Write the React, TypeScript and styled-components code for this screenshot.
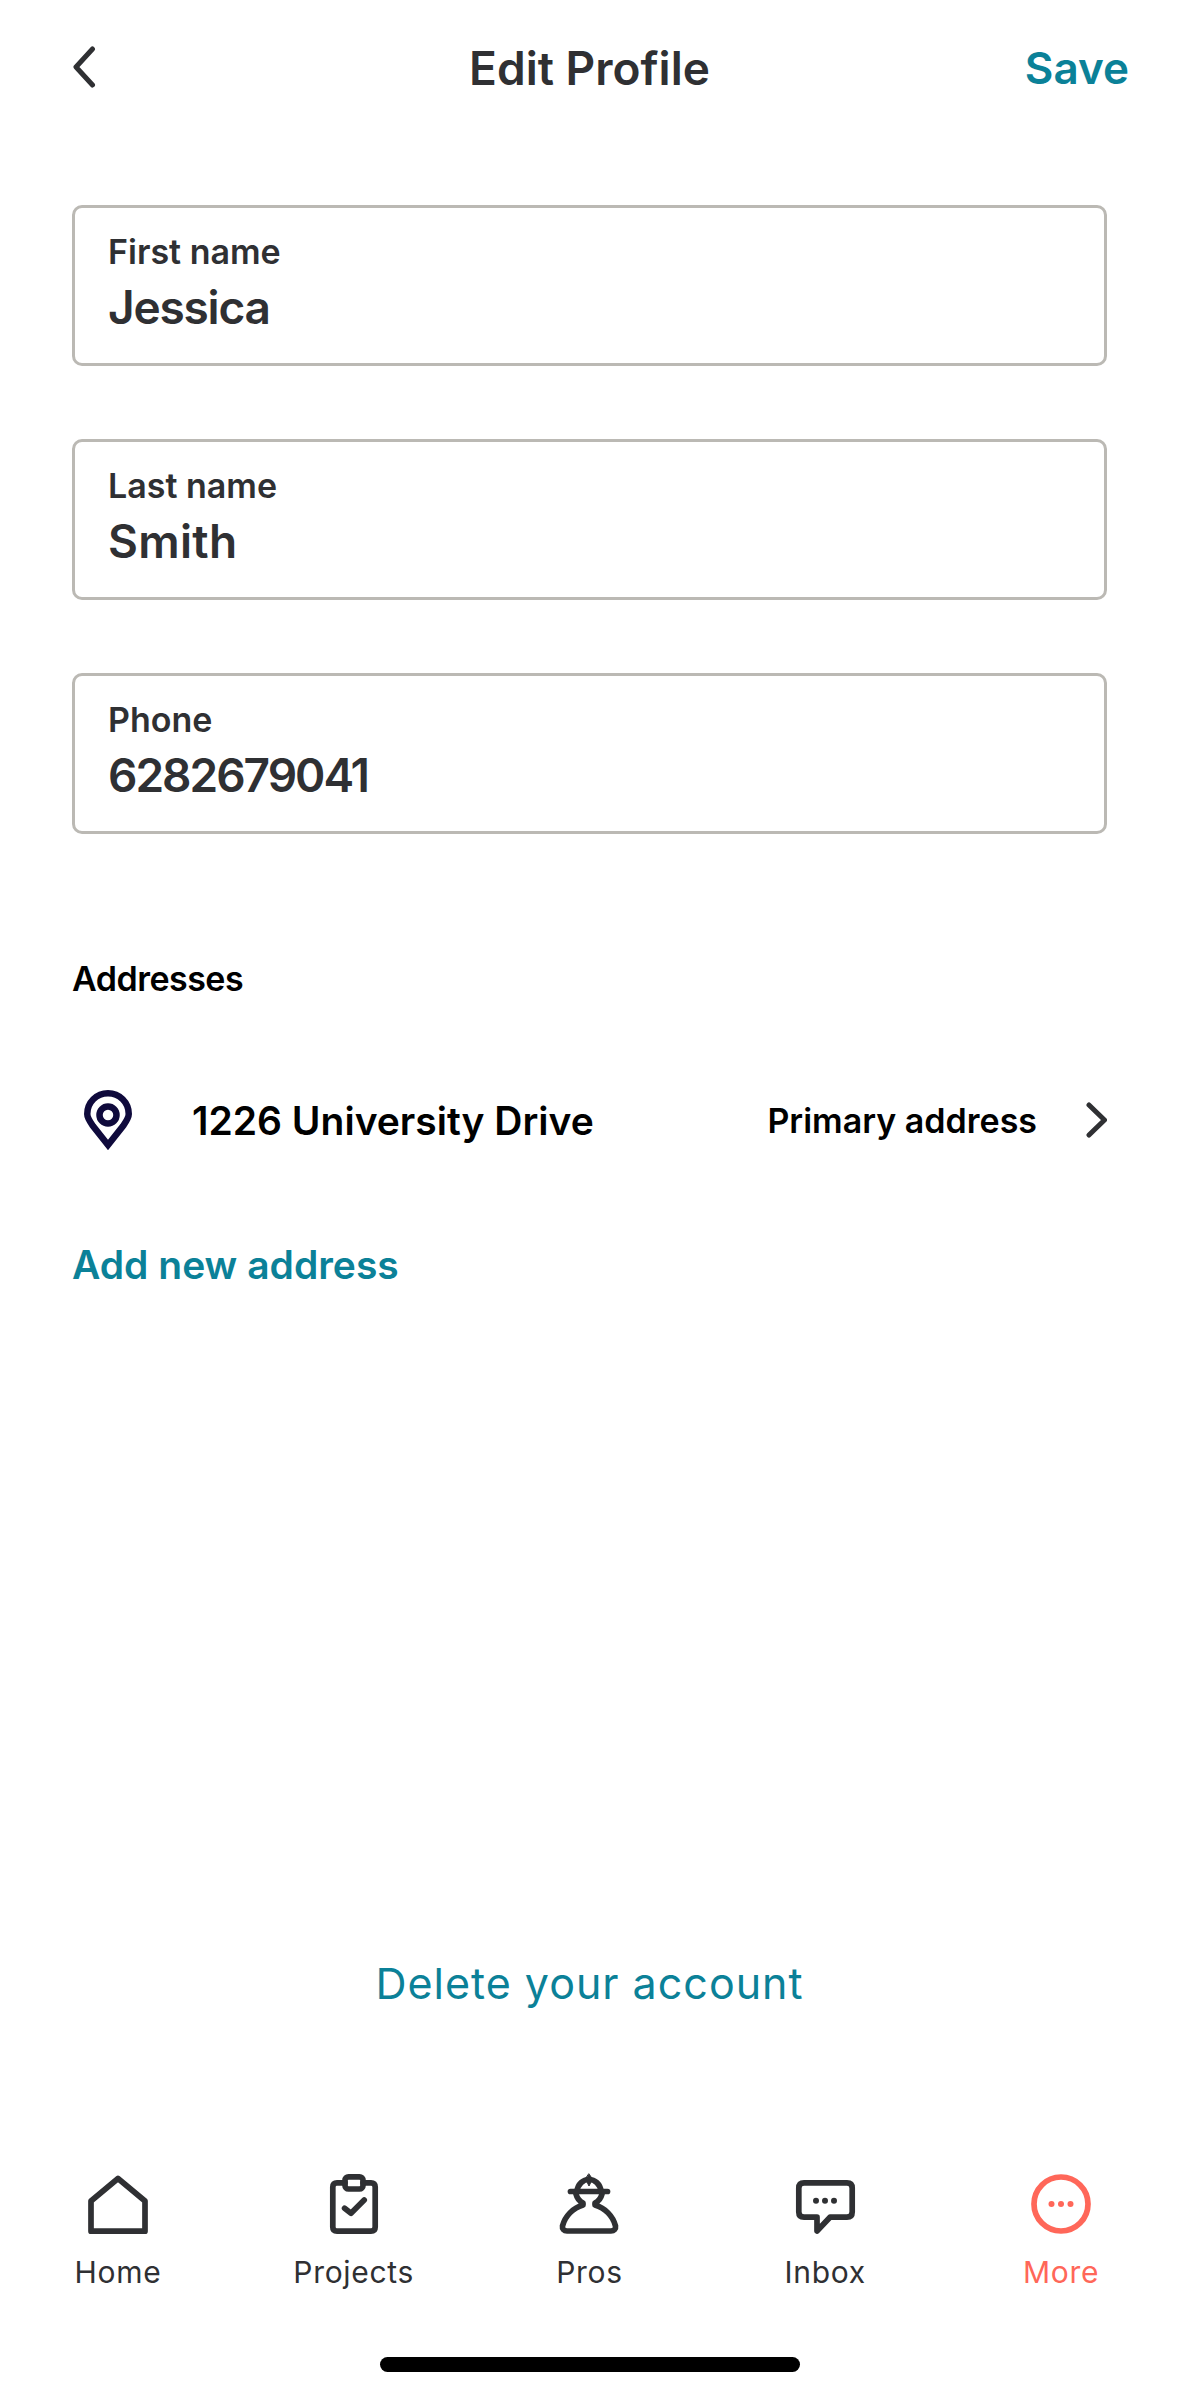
import React from 'react';
import styled, { createGlobalStyle } from 'styled-components';

const GlobalStyle = createGlobalStyle`
  html, body {
    margin: 0;
    padding: 0;
    background: #fff;
  }
  body {
    font-family: 'Inter', 'Liberation Sans', sans-serif;
  }
`;

const fields = [
  { label: 'First name', value: 'Jessica', tracking: -1.2 },
  { label: 'Last name', value: 'Smith', tracking: 0.3 },
  { label: 'Phone', value: '6282679041', tracking: -2 },
];

function HomeIcon() {
  return (
    <svg width="64" height="64" viewBox="0 0 64 64" fill="none" stroke="#2f3033" strokeWidth="5.7" strokeLinejoin="round">
      <path d="M32 5.5 L59 28 V58.2 H5 V28 Z" />
    </svg>
  );
}

function ProjectsIcon() {
  return (
    <svg width="64" height="64" viewBox="0 0 64 64" fill="none" stroke="#2f3033" strokeWidth="5.7" strokeLinecap="round" strokeLinejoin="round">
      <path d="M23 9.8 H15 Q10.8 9.8 10.8 14 V54 Q10.8 58.2 15 58.2 H49 Q53.2 58.2 53.2 54 V14 Q53.2 9.8 49 9.8 H41" />
      <rect x="23" y="3.8" width="18" height="12.2" rx="3.5" />
      <path d="M22.6 35.3 L29 40.3 L42.2 27" />
    </svg>
  );
}

function ProsIcon() {
  return (
    <svg width="64" height="64" viewBox="0 0 64 64" fill="none" stroke="#2f3033" strokeWidth="5.7" strokeLinecap="round" strokeLinejoin="round">
      <path d="M19 21 C20 25 22 28 26 30 V32 C16 35 8 43 5.5 53 C5 56 7 58 10 58 H54 C57 58 59 56 58.5 53 C56 43 48 35 38 32 V30 C42 28 44 25 45 21" />
      <path d="M13.5 18.5 H50.5" />
      <path d="M20 18 C21 11 26 6.5 32 6.5 C38 6.5 43 11 44 18" />
      <path d="M32 1 L35.5 6 L32 13 L28.5 6 Z" fill="#2f3033" strokeWidth="1" />
    </svg>
  );
}

function InboxIcon() {
  return (
    <svg width="64" height="64" viewBox="0 0 64 64" fill="none" stroke="#2f3033" strokeWidth="5.7" strokeLinecap="round" strokeLinejoin="round">
      <path d="M11 9.8 H54 Q59.2 9.8 59.2 15 V39 Q59.2 44.2 54 44.2 H37 L24 58 V44.2 H11 Q5.8 44.2 5.8 39 V15 Q5.8 9.8 11 9.8 Z" />
      <circle cx="23" cy="27.7" r="3" fill="#2f3033" stroke="none" />
      <circle cx="32" cy="27.7" r="3" fill="#2f3033" stroke="none" />
      <circle cx="41" cy="27.7" r="3" fill="#2f3033" stroke="none" />
    </svg>
  );
}

function MoreIcon() {
  return (
    <svg width="64" height="64" viewBox="0 0 64 64" fill="none" stroke="#ff6759" strokeWidth="5.7">
      <circle cx="32" cy="31" r="27" />
      <circle cx="22.5" cy="31" r="3" fill="#ff6759" stroke="none" />
      <circle cx="32" cy="31" r="3" fill="#ff6759" stroke="none" />
      <circle cx="41.5" cy="31" r="3" fill="#ff6759" stroke="none" />
    </svg>
  );
}

const tabs = [
  { label: 'Home', icon: <HomeIcon /> },
  { label: 'Projects', icon: <ProjectsIcon /> },
  { label: 'Pros', icon: <ProsIcon /> },
  { label: 'Inbox', icon: <InboxIcon /> },
  { label: 'More', icon: <MoreIcon />, active: true },
];

export default function App() {
  return (
    <>
      <GlobalStyle />
      <Page>
        <Header>
          <BackButton>
            <svg width="24" height="42" viewBox="0 0 24 42" fill="none" stroke="#2f3033" strokeWidth="5" strokeLinecap="round" strokeLinejoin="round">
              <path d="M20.5 3 L4 21 L20.5 39" />
            </svg>
          </BackButton>
          <Title>Edit Profile</Title>
          <SaveLink>Save</SaveLink>
        </Header>

        <Form>
          {fields.map((field) => (
            <Field key={field.label}>
              <FieldLabel>{field.label}</FieldLabel>
              <FieldValue $tracking={field.tracking}>{field.value}</FieldValue>
            </Field>
          ))}
        </Form>

        <SectionTitle>Addresses</SectionTitle>

        <AddressRow>
          <PinSlot>
            <svg width="48" height="60" viewBox="0 0 48 60" fill="none" stroke="#0f0a3c" strokeWidth="6.5">
              <path d="M24 55 L9 36 C5.5 31 3.25 28 3.25 24 C3.25 12.5 12.5 3.25 24 3.25 C35.5 3.25 44.75 12.5 44.75 24 C44.75 28 42.5 31 39 36 Z" />
              <circle cx="24" cy="25" r="8.5" />
            </svg>
          </PinSlot>
          <AddressName>1226 University Drive</AddressName>
          <AddressTag>Primary address</AddressTag>
          <svg width="22" height="36" viewBox="0 0 22 36" fill="none" stroke="#2f3033" strokeWidth="5" strokeLinecap="round" strokeLinejoin="round">
            <path d="M4 3 L19.5 18 L4 33" />
          </svg>
        </AddressRow>

        <AddAddress>Add new address</AddAddress>

        <DeleteAccount>Delete your account</DeleteAccount>

        <TabBar>
          {tabs.map((tab) => (
            <Tab key={tab.label} $active={tab.active}>
              {tab.icon}
              <span>{tab.label}</span>
            </Tab>
          ))}
        </TabBar>

        <HomeIndicator />
      </Page>
    </>
  );
}

const Page = styled.div`
  width: 1179px;
  height: 2396px;
  display: flex;
  flex-direction: column;
  box-sizing: border-box;
  padding: 38px 0 0;
  color: #2f3033;
  overflow: hidden;
`;

const Header = styled.div`
  display: grid;
  grid-template-columns: 1fr auto 1fr;
  align-items: center;
  height: 60px;
  padding: 0 50px;
`;

const BackButton = styled.div`
  display: flex;
  align-items: center;
  padding: 0 0 3px 22px;
`;

const Title = styled.div`
  font-size: 46px;
  font-weight: 600;
`;

const SaveLink = styled.div`
  justify-self: end;
  font-size: 44px;
  font-weight: 600;
  color: #0b8198;
`;

const Form = styled.div`
  display: flex;
  flex-direction: column;
  gap: 73px;
  margin: 107px 72px 0;
`;

const Field = styled.div`
  height: 161px;
  box-sizing: border-box;
  border: 3px solid #bbb9b4;
  border-radius: 10px;
  padding: 23px 33px 0;
`;

const FieldLabel = styled.div`
  font-size: 34px;
  line-height: 42px;
  font-weight: 600;
`;

const FieldValue = styled.div<{ $tracking: number }>`
  margin-top: 6px;
  font-size: 46px;
  line-height: 56px;
  font-weight: 600;
  letter-spacing: ${(props) => props.$tracking}px;
`;

const SectionTitle = styled.div`
  margin: 124px 72px 0;
  font-size: 34px;
  line-height: 42px;
  font-weight: 600;
  letter-spacing: -0.5px;
  color: #000;
`;

const AddressRow = styled.div`
  display: flex;
  align-items: center;
  margin: 85px 72px 0;
  height: 70px;
  color: #000;
`;

const PinSlot = styled.div`
  width: 120px;
  padding-left: 12px;
  box-sizing: border-box;
  display: flex;
`;

const AddressName = styled.div`
  flex: 1;
  font-size: 39px;
  font-weight: 600;
`;

const AddressTag = styled.div`
  font-size: 34px;
  font-weight: 600;
  margin-right: 48px;
`;

const AddAddress = styled.div`
  margin: 85px 72px 0;
  font-size: 39px;
  line-height: 50px;
  font-weight: 600;
  color: #0b8198;
`;

const DeleteAccount = styled.div`
  margin-top: auto;
  text-align: center;
  font-size: 43px;
  line-height: 56px;
  letter-spacing: 1px;
  color: #0b8198;
`;

const TabBar = styled.div`
  display: grid;
  grid-template-columns: repeat(5, 1fr);
  margin-top: 162px;
`;

const Tab = styled.div<{ $active?: boolean }>`
  display: flex;
  flex-direction: column;
  align-items: center;
  gap: 17px;
  font-size: 30px;
  line-height: 36px;
  letter-spacing: 0.7px;
  color: ${(props) => (props.$active ? '#ff6759' : '#2f3033')};
`;

const HomeIndicator = styled.div`
  width: 420px;
  height: 15px;
  margin: 67px auto 24px;
  background: #000;
  border-radius: 8px;
`;
